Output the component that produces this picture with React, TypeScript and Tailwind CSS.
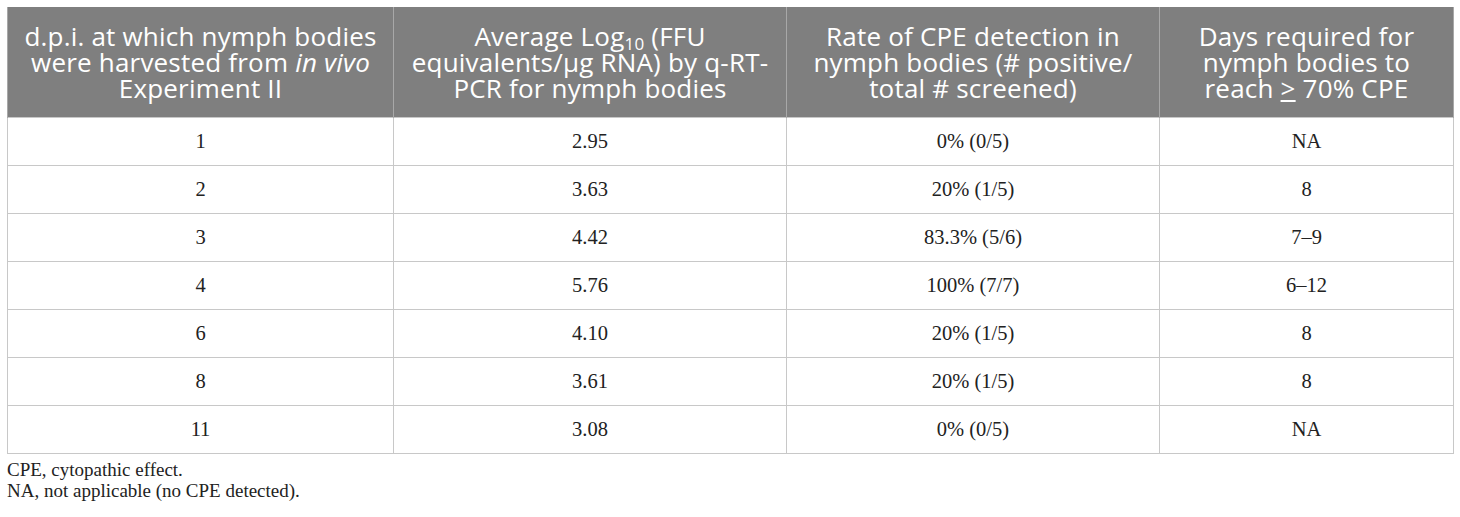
const rows: [string, string, string, string][] = [
  ['1', '2.95', '0% (0/5)', 'NA'],
  ['2', '3.63', '20% (1/5)', '8'],
  ['3', '4.42', '83.3% (5/6)', '7–9'],
  ['4', '5.76', '100% (7/7)', '6–12'],
  ['6', '4.10', '20% (1/5)', '8'],
  ['8', '3.61', '20% (1/5)', '8'],
  ['11', '3.08', '0% (0/5)', 'NA'],
];

const th =
  'border-x border-[#a8a8a8] px-3 align-middle text-center font-normal text-white text-[26px] leading-[26px] tracking-[0.2px]';
const td = 'border border-[#c8c8c8] h-[48px] text-center align-middle text-[20.5px] text-[#222]';

export default function App() {
  return (
    <div className="bg-white w-[1460px] h-[517px] pt-[7px] px-[7px]">
      <table className="w-[1446px] border-collapse table-fixed">
        <colgroup>
          <col className="w-[386px]" />
          <col className="w-[393px]" />
          <col className="w-[373px]" />
          <col className="w-[294px]" />
        </colgroup>
        <thead>
          <tr className="bg-[#7f7f7f] h-[110px] font-['Open_Sans',sans-serif]">
            <th className={th}>
              d.p.i. at which nymph bodies were harvested from <i>in vivo</i> Experiment II
            </th>
            <th className={th}>
              Average Log<sub className="text-[17px] leading-none">10</sub> (FFU equivalents/µg RNA) by q-RT-PCR for nymph bodies
            </th>
            <th className={th}>Rate of CPE detection in nymph bodies (# positive/ total # screened)</th>
            <th className={th}>
              Days required for nymph bodies to reach <u>&gt;</u> 70% CPE
            </th>
          </tr>
        </thead>
        <tbody className="font-['Liberation_Serif',serif]">
          {rows.map((r, i) => (
            <tr key={i}>
              {r.map((c, j) => (
                <td key={j} className={td}>
                  {c}
                </td>
              ))}
            </tr>
          ))}
        </tbody>
      </table>
      <div className="mt-[5px] font-['Liberation_Serif',serif] text-[19px] leading-[21px] text-[#222]">
        <p>CPE, cytopathic effect.</p>
        <p>NA, not applicable (no CPE detected).</p>
      </div>
    </div>
  );
}
